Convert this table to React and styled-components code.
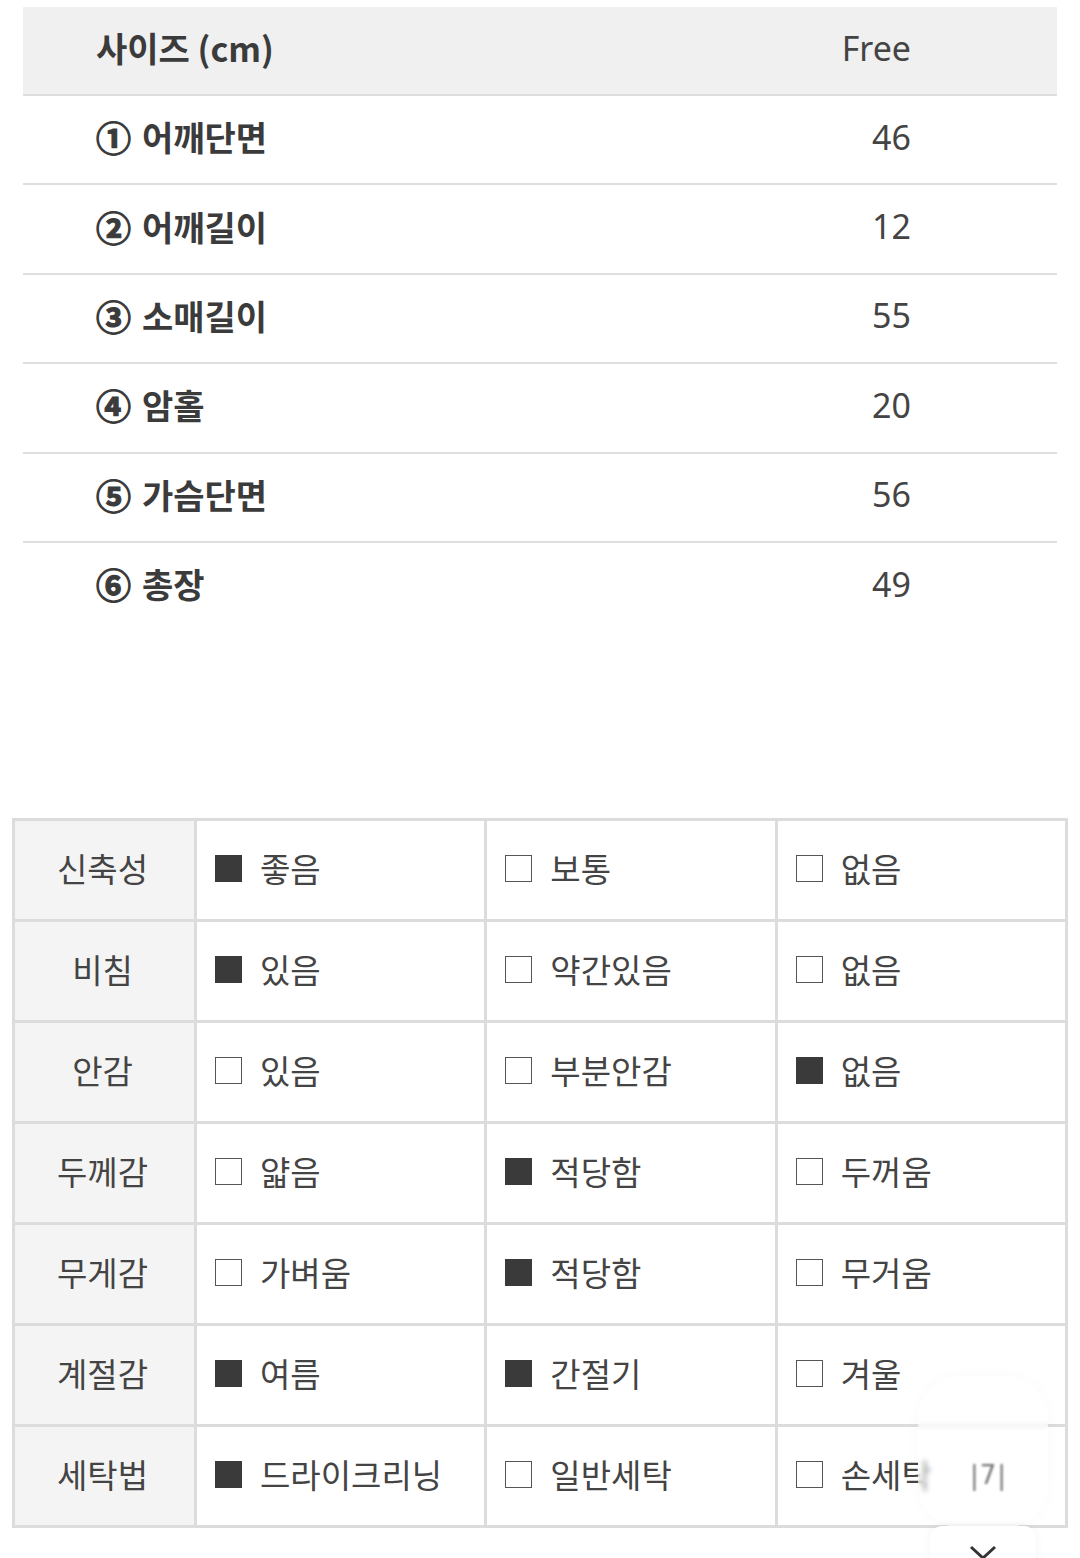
import React from 'react'
import styled, { createGlobalStyle } from 'styled-components'

const GlobalStyle = createGlobalStyle`
  html, body { margin: 0; padding: 0; background: #fff; }
  body { font-family: "Noto Sans CJK KR", "Noto Sans", sans-serif; color: #444; }
`

const Page = styled.div`
  position: relative;
  width: 1080px;
  height: 1558px;
  overflow: hidden;
  padding-top: 7px;
  box-sizing: border-box;
`

const SizeTable = styled.div`
  margin-left: 23px;
  width: 1034px;
`

const SizeRow = styled.div`
  display: flex;
  align-items: center;
  box-sizing: content-box;
  height: ${({ head }) => (head ? '81px' : '81.4px')};
  background: ${({ head }) => (head ? '#f0f0f0' : '#fff')};
  border-bottom: ${({ last }) => (last ? 'none' : '2px solid #dedede')};
  padding: 0 146px 6px 73px;
`

const SizeLabel = styled.div`
  flex: 1;
  display: flex;
  align-items: center;
  gap: 11px;
  font-family: "Noto Sans CJK KR", sans-serif;
  font-weight: 700;
  font-size: 34px;
  color: #3b3b3b;
`

const Num = styled.span`
  font-size: 35px;
  -webkit-text-stroke: 1.2px #3b3b3b;
`

const SizeValue = styled.div`
  font-family: "Noto Sans", Roboto, sans-serif;
  font-size: 34px;
  color: #444;
  text-align: right;
`

const InfoTable = styled.div`
  margin: 188px 0 0 12px;
  width: 1056px;
  display: grid;
  grid-template-columns: 179px 1fr 1fr 1fr;
  grid-auto-rows: 98px;
  gap: 3px;
  padding: 3px;
  box-sizing: border-box;
  background: #dcdcdc;
`

const HeadCell = styled.div`
  background: #f4f4f4;
  display: flex;
  align-items: center;
  justify-content: center;
  padding: 0 4px 5px 0;
  font-family: "Noto Sans CJK KR", sans-serif;
  font-size: 33px;
  color: #444;
`

const OptCell = styled.div`
  background: #fff;
  display: flex;
  align-items: center;
  padding: 0 0 4px 18px;
  gap: 18px;
  font-family: "Noto Sans CJK KR", sans-serif;
  font-size: 33px;
  color: #444;
`

const Box = styled.span`
  width: 27px;
  height: 27px;
  box-sizing: border-box;
  flex: none;
  background: ${({ on }) => (on ? '#3a3a3a' : '#fff')};
  border: ${({ on }) => (on ? 'none' : '1.5px solid #555')};
`

const Frost = styled.div`
  position: absolute;
  left: 918px;
  top: 1376px;
  width: 130px;
  height: 152px;
  border-radius: 44px;
  background: rgba(255, 255, 255, 0.5);
  backdrop-filter: blur(2.5px);
  box-shadow: 0 0 18px rgba(0, 0, 0, 0.025);
`

const FrostMark = styled.span`
  position: absolute;
  left: 52px;
  top: 84px;
  font-family: "DejaVu Sans", sans-serif;
  font-size: 26px;
  color: #777;
  filter: blur(1px);
  letter-spacing: 1px;
`

const ScrollBtn = styled.div`
  position: absolute;
  left: 930px;
  top: 1526px;
  width: 106px;
  height: 48px;
  border-radius: 12px;
  background: #fff;
  box-shadow: 0 0 10px rgba(0, 0, 0, 0.05);
  display: flex;
  justify-content: center;
  padding-top: 18px;
  box-sizing: border-box;
`

const sizes = [
  ['①', '어깨단면', '46'],
  ['②', '어깨길이', '12'],
  ['③', '소매길이', '55'],
  ['④', '암홀', '20'],
  ['⑤', '가슴단면', '56'],
  ['⑥', '총장', '49'],
]

const info = [
  ['신축성', [['좋음', 1], ['보통', 0], ['없음', 0]]],
  ['비침', [['있음', 1], ['약간있음', 0], ['없음', 0]]],
  ['안감', [['있음', 0], ['부분안감', 0], ['없음', 1]]],
  ['두께감', [['얇음', 0], ['적당함', 1], ['두꺼움', 0]]],
  ['무게감', [['가벼움', 0], ['적당함', 1], ['무거움', 0]]],
  ['계절감', [['여름', 1], ['간절기', 1], ['겨울', 0]]],
  ['세탁법', [['드라이크리닝', 1], ['일반세탁', 0], ['손세탁', 0]]],
]

const App = () => {
  return (
    <>
      <GlobalStyle />
      <Page>
        <SizeTable>
          <SizeRow head>
            <SizeLabel>사이즈 (cm)</SizeLabel>
            <SizeValue>Free</SizeValue>
          </SizeRow>
          {sizes.map(([num, label, val], i) => (
            <SizeRow key={label} last={i === sizes.length - 1}>
              <SizeLabel>
                <Num>{num}</Num>
                {label}
              </SizeLabel>
              <SizeValue>{val}</SizeValue>
            </SizeRow>
          ))}
        </SizeTable>

        <InfoTable>
          {info.map(([title, opts]) => (
            <React.Fragment key={title}>
              <HeadCell>{title}</HeadCell>
              {opts.map(([text, on]) => (
                <OptCell key={text}>
                  <Box on={on ? 1 : 0} />
                  {text}
                </OptCell>
              ))}
            </React.Fragment>
          ))}
        </InfoTable>

        <Frost>
          <FrostMark>|7|</FrostMark>
        </Frost>
        <ScrollBtn>
          <svg width="30" height="18" viewBox="0 0 30 18">
            <path d="M3 3 L15 14 L27 3" fill="none" stroke="#333" strokeWidth="3" />
          </svg>
        </ScrollBtn>
      </Page>
    </>
  )
}

export default App
